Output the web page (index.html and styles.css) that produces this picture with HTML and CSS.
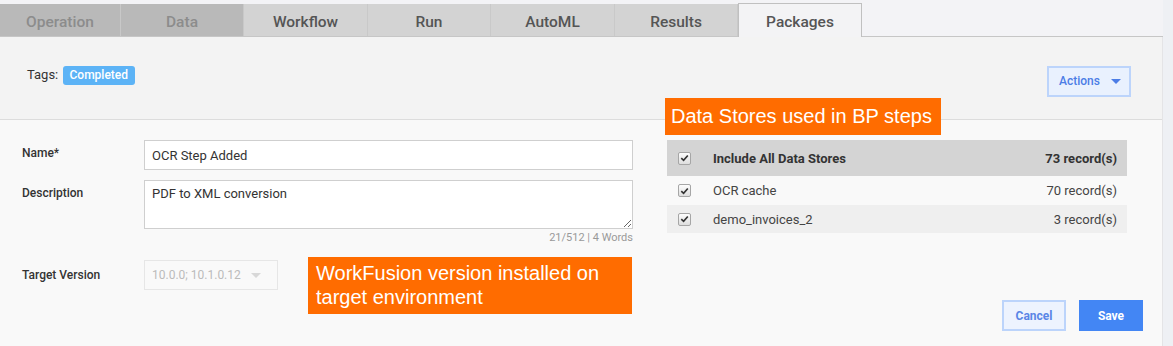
FILE: index.html
```html
<!DOCTYPE html>
<html lang="en">
<head>
  <meta charset="UTF-8" />
  <title>Packages</title>
  <link rel="stylesheet" href="styles.css">
</head>
<body>

  <div class="page">
    <div class="tabs">
      <div class="tab disabled">Operation</div>
      <div class="tab disabled">Data</div>
      <div class="tab">Workflow</div>
      <div class="tab">Run</div>
      <div class="tab">AutoML</div>
      <div class="tab">Results</div>
      <div class="tab active">Packages</div>
    </div>

    <div class="panel">
      <div class="panel-head">
        <div class="tags">Tags: <span class="badge">Completed</span></div>
        <button class="btn-actions">Actions <span class="caret"></span></button>
      </div>

      <div class="panel-body">
        <div class="form">
          <label class="form-label">Name*</label>
          <div class="form-field">
            <input class="text-input" type="text" value="OCR Step Added">
          </div>

          <label class="form-label label-desc">Description</label>
          <div class="form-field">
            <textarea class="text-area">PDF to XML conversion</textarea>
            <div class="counter">21/512 | 4 Words</div>
          </div>

          <label class="form-label label-target">Target Version</label>
          <div class="form-field">
            <div class="select-box">10.0.0; 10.1.0.12 <span class="caret grey"></span></div>
          </div>
        </div>

        <div class="side">
          <div class="stores">
            <div class="store-row store-head">
              <span class="check"><svg viewBox="0 0 12 12" width="12" height="12"><path d="M2.5 6.2 L5 8.6 L9.6 3.2" fill="none" stroke="#333" stroke-width="1.8"/></svg></span>
              <span class="store-name">Include All Data Stores</span>
              <span class="store-count">73 record(s)</span>
            </div>
            <div class="store-row">
              <span class="check"><svg viewBox="0 0 12 12" width="12" height="12"><path d="M2.5 6.2 L5 8.6 L9.6 3.2" fill="none" stroke="#333" stroke-width="1.8"/></svg></span>
              <span class="store-name">OCR cache</span>
              <span class="store-count">70 record(s)</span>
            </div>
            <div class="store-row alt">
              <span class="check"><svg viewBox="0 0 12 12" width="12" height="12"><path d="M2.5 6.2 L5 8.6 L9.6 3.2" fill="none" stroke="#333" stroke-width="1.8"/></svg></span>
              <span class="store-name">demo_invoices_2</span>
              <span class="store-count">3 record(s)</span>
            </div>
          </div>

          <div class="buttons">
            <button class="btn-cancel">Cancel</button>
            <button class="btn-save">Save</button>
          </div>
        </div>
      </div>

      <!-- annotation callouts -->
      <div class="callout callout-stores">Data Stores used in BP steps</div>
      <div class="callout callout-version">WorkFusion version installed on<br>target environment</div>
    </div>
  </div>

</body>
</html>
```

FILE: styles.css
```css
body {
  margin: 0;
  background-color: #eef0f4;
  font-family: Roboto, "Liberation Sans", sans-serif;
  color: #333;
  overflow: hidden;
}

.page {
  width: 1163px;
  background-color: #f3f3f6;
  padding-top: 4px;
}

.tabs {
  display: flex;
  height: 32px;
  border-bottom: 1px solid #c6c6c6;
}

.tab {
  width: 123px;
  height: 32px;
  box-sizing: border-box;
  padding-top: 3px;
  border-right: 1px solid #c9c9c9;
  background-color: #d3d3d3;
  color: #555;
  font-size: 15.5px;
  font-weight: 500;
  display: flex;
  align-items: center;
  justify-content: center;
  flex: none;
}

.tab:first-child {
  width: 121px;
}

.tab:nth-child(3),
.tab:nth-child(5) {
  width: 124px;
}

.tab.disabled {
  background-color: #b9b9b9;
  color: #8c8c8c;
  border-right-color: #c8c8c8;
}

.tab.active {
  width: 124px;
  height: 34px;
  background-color: #f3f3f5;
  border: 1px solid #c0c0c0;
  border-bottom: none;
  margin-top: -1px;
  padding-top: 2px;
}

.panel {
  position: relative;
  border-right: 1px solid #e4e4e6;
}

.panel-head {
  height: 82px;
  background-color: #f3f3f3;
  border-bottom: 1px solid #dcdcdc;
  display: flex;
  align-items: center;
  justify-content: space-between;
  padding: 0 31px 0 27px;
}

.tags {
  font-size: 13px;
  color: #333;
  margin-top: -6px;
}

.badge {
  display: inline-block;
  background-color: #5cb3f6;
  color: white;
  font-size: 12px;
  font-weight: 500;
  padding: 2px 7px 3px;
  border-radius: 3px;
  margin-left: 1px;
}

.btn-actions {
  width: 84px;
  height: 31px;
  margin-top: 6px;
  background-color: #e9f1fe;
  border: 2px solid #bcd4fb;
  color: #4c7de6;
  font-family: Roboto, "Liberation Sans", sans-serif;
  font-size: 12px;
  font-weight: 500;
  padding: 0 0 0 2px;
}

.caret {
  display: inline-block;
  width: 0;
  height: 0;
  border-left: 5px solid transparent;
  border-right: 5px solid transparent;
  border-top: 5px solid #4c7de6;
  margin-left: 8px;
  vertical-align: middle;
}

.caret.grey {
  border-top-color: #d8d8d8;
  margin-left: 10px;
}

.panel-body {
  height: 226px;
  background-color: #f9f9f9;
  display: flex;
  justify-content: space-between;
  padding: 20px 19px 0 22px;
  box-sizing: border-box;
}

.form {
  display: grid;
  grid-template-columns: 122px 489px;
  row-gap: 10px;
  align-content: start;
}

.form-label {
  font-size: 12px;
  font-weight: 500;
  color: #333;
  padding-top: 6px;
}

.label-desc {
  padding-top: 6px;
}

.label-target {
  padding-top: 8px;
}

.text-input {
  width: 100%;
  height: 30px;
  box-sizing: border-box;
  border: 1px solid #cfcfcf;
  background: white;
  font-family: Roboto, "Liberation Sans", sans-serif;
  font-size: 13px;
  color: #333;
  padding: 0 7px;
  outline: none;
}

.text-area {
  display: block;
  width: 100%;
  height: 49px;
  box-sizing: border-box;
  border: 1px solid #cfcfcf;
  background: white;
  font-family: Roboto, "Liberation Sans", sans-serif;
  font-size: 13px;
  color: #333;
  padding: 5px 7px;
  margin: 0;
  resize: vertical;
  outline: none;
}

.counter {
  text-align: right;
  font-size: 11px;
  color: #999;
  margin-top: 2px;
  margin-bottom: 6px;
}

.select-box {
  width: 134px;
  height: 30px;
  box-sizing: border-box;
  border: 1px solid #e6e6e6;
  background-color: #f9f9f9;
  color: #bbb;
  font-size: 12px;
  display: flex;
  align-items: center;
  padding-left: 7px;
}

.side {
  width: 476px;
  display: flex;
  flex-direction: column;
  justify-content: space-between;
  padding-bottom: 15px;
  box-sizing: border-box;
}

.stores {
  width: 460px;
}

.store-row {
  display: flex;
  align-items: center;
  height: 29px;
  padding: 0 10px 0 11px;
  font-size: 13px;
  color: #444;
  background-color: #f9f9f9;
}

.store-row.store-head {
  height: 36px;
  background-color: #d4d4d4;
  font-weight: bold;
  color: #333;
  box-sizing: border-box;
}

.store-row.alt {
  height: 28px;
  background-color: #efefef;
}

.check {
  width: 11px;
  height: 11px;
  border: 1px solid #a6a6a6;
  border-radius: 2px;
  background: linear-gradient(#fdfdfd, #dedede);
  display: flex;
  align-items: center;
  justify-content: center;
  margin-right: 22px;
}

.store-name {
  flex: 1;
}

.buttons {
  display: flex;
  justify-content: flex-end;
  gap: 13px;
}

.btn-cancel,
.btn-save {
  width: 64px;
  height: 31px;
  font-family: Roboto, "Liberation Sans", sans-serif;
  font-size: 12px;
  font-weight: bold;
}

.btn-cancel {
  background-color: #edf3fe;
  border: 2px solid #bcd4fb;
  color: #5a86e6;
}

.btn-save {
  background-color: #4386f4;
  border: none;
  color: white;
}

.callout {
  position: absolute;
  background-color: #ff6c00;
  color: white;
  font-family: "Liberation Sans", Arial, sans-serif;
  font-size: 20px;
  line-height: 24px;
}

.callout-stores {
  left: 665px;
  top: 61px;
  width: 276px;
  height: 37px;
  box-sizing: border-box;
  padding: 6px 0 0 6px;
}

.callout-version {
  left: 308px;
  top: 220px;
  width: 324px;
  height: 57px;
  box-sizing: border-box;
  padding: 4px 0 0 8px;
}
```
